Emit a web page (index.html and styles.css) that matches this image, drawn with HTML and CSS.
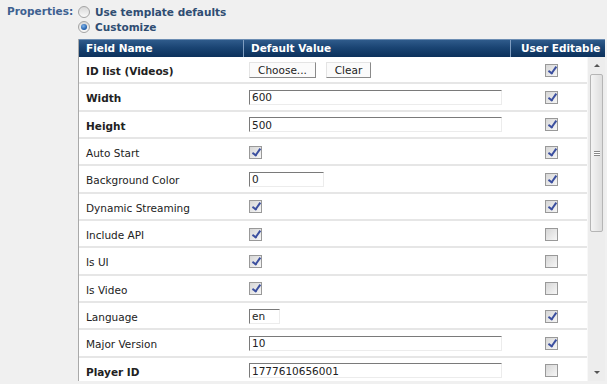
FILE: index.html
```html
<!DOCTYPE html>
<html lang="en">
<head>
    <meta charset="UTF-8">
    <title>Player Properties</title>
    <link rel="stylesheet" href="styles.css">
</head>
<body>
    <div class="props">
        <div class="props-label">Properties:</div>
        <div class="props-body">
            <div class="choices">
                <div class="choice"><span class="radio"></span>Use template defaults</div>
                <div class="choice"><span class="radio on"></span>Customize</div>
            </div>

            <div class="grid">
                <div class="grid-head">
                    <div class="hcell">Field Name</div>
                    <div class="hcell">Default Value</div>
                    <div class="hcell">User Editable</div>
                </div>
                <div class="grid-wrap">
                    <div class="grid-rows">
                        <div class="row">
                            <div class="c-name bold">ID list (Videos)</div>
                            <div class="c-value">
                                <button class="btn">Choose...</button>
                                <button class="btn">Clear</button>
                            </div>
                            <div class="c-edit"><span class="check on"></span></div>
                        </div>
                        <div class="row">
                            <div class="c-name bold">Width</div>
                            <div class="c-value"><input class="field wide" type="text" value="600"></div>
                            <div class="c-edit"><span class="check on"></span></div>
                        </div>
                        <div class="row">
                            <div class="c-name bold">Height</div>
                            <div class="c-value"><input class="field wide" type="text" value="500"></div>
                            <div class="c-edit"><span class="check on"></span></div>
                        </div>
                        <div class="row">
                            <div class="c-name">Auto Start</div>
                            <div class="c-value"><span class="check on"></span></div>
                            <div class="c-edit"><span class="check on"></span></div>
                        </div>
                        <div class="row">
                            <div class="c-name">Background Color</div>
                            <div class="c-value"><input class="field mid" type="text" value="0"></div>
                            <div class="c-edit"><span class="check on"></span></div>
                        </div>
                        <div class="row">
                            <div class="c-name">Dynamic Streaming</div>
                            <div class="c-value"><span class="check on"></span></div>
                            <div class="c-edit"><span class="check on"></span></div>
                        </div>
                        <div class="row">
                            <div class="c-name">Include API</div>
                            <div class="c-value"><span class="check on"></span></div>
                            <div class="c-edit"><span class="check"></span></div>
                        </div>
                        <div class="row">
                            <div class="c-name">Is UI</div>
                            <div class="c-value"><span class="check on"></span></div>
                            <div class="c-edit"><span class="check"></span></div>
                        </div>
                        <div class="row">
                            <div class="c-name">Is Video</div>
                            <div class="c-value"><span class="check on"></span></div>
                            <div class="c-edit"><span class="check"></span></div>
                        </div>
                        <div class="row">
                            <div class="c-name">Language</div>
                            <div class="c-value"><input class="field short" type="text" value="en"></div>
                            <div class="c-edit"><span class="check on"></span></div>
                        </div>
                        <div class="row">
                            <div class="c-name">Major Version</div>
                            <div class="c-value"><input class="field wide" type="text" value="10"></div>
                            <div class="c-edit"><span class="check on"></span></div>
                        </div>
                        <div class="row">
                            <div class="c-name bold">Player ID</div>
                            <div class="c-value"><input class="field wide" type="text" value="1777610656001"></div>
                            <div class="c-edit"><span class="check"></span></div>
                        </div>
                    </div>
                    <!-- fake scrollbar -->
                    <div class="scrollbar">
                        <div class="arrow up"></div>
                        <div class="thumb"><span class="grip"></span></div>
                        <div class="track"></div>
                        <div class="arrow down"></div>
                    </div>
                </div>
            </div>
        </div>
    </div>
</body>
</html>
```

FILE: styles.css
```css
body {
    margin: 0;
    padding: 0;
    background: #f0f0f0;
    font-family: "DejaVu Sans", Verdana, sans-serif;
    font-size: 10.5px;
    color: #222;
    overflow: hidden;
}
.props {
    display: flex;
    padding-top: 4px;
}
.props-label {
    width: 78px;
    flex-shrink: 0;
    padding-left: 7px;
    box-sizing: border-box;
    font-weight: bold;
    color: #3d6190;
    line-height: 15px;
}
.props-body {
    width: 527px;
}
.choices {
    margin-bottom: 5px;
}
.choice {
    display: flex;
    align-items: center;
    height: 15px;
    font-weight: bold;
    color: #2f4d72;
}
.radio {
    width: 10px;
    height: 10px;
    border: 1px solid #a4a4a4;
    border-radius: 50%;
    background: linear-gradient(#d8d8d8, #fafafa);
    margin-right: 5px;
    position: relative;
}
.radio.on::after {
    content: "";
    position: absolute;
    left: 2px;
    top: 2px;
    width: 6px;
    height: 6px;
    border-radius: 50%;
    background: radial-gradient(circle at 40% 35%, #7fb3e8, #1c5aa8 70%);
}
.grid {
    border-left: 1px solid #a9a9a9;
}
.grid-head {
    display: grid;
    grid-template-columns: 164px 267px 95px;
    height: 18px;
    background: linear-gradient(#2f5b8b, #1a4473 45%, #0c315b);
    border-top: 1px solid #6c8db3;
    box-sizing: border-box;
}
.hcell {
    color: #fff;
    font-weight: bold;
    line-height: 17px;
    padding-left: 7px;
    border-left: 1px solid #7f9dc0;
}
.hcell:first-child {
    border-left: none;
    padding-left: 7px;
}
.hcell:last-child {
    padding-left: 10px;
}
.grid-wrap {
    display: flex;
    height: 324px;
    background: #fff;
}
.grid-rows {
    width: 510px;
    overflow: hidden;
}
.row {
    display: grid;
    grid-template-columns: 164px 267px 79px;
    height: 27.33px;
    box-sizing: border-box;
    border-bottom: 2px solid #e6e6e6;
    align-items: center;
}
.c-name {
    padding-left: 7px;
    padding-top: 3px;
}
.bold {
    font-weight: bold;
}
.c-value {
    display: flex;
    align-items: center;
    gap: 10px;
    padding-left: 6px;
    padding-top: 1px;
}
.c-edit {
    display: flex;
    justify-content: center;
    padding-left: 4px;
    padding-top: 1px;
}
.check {
    display: block;
    width: 11px;
    height: 11px;
    border: 1px solid #999;
    background: linear-gradient(135deg, #d6d6d6, #f6f6f6);
    position: relative;
}
.check.on::after {
    content: "";
    position: absolute;
    left: 4px;
    top: 0;
    width: 3px;
    height: 7px;
    border-right: 2px solid #3b4f9f;
    border-bottom: 2px solid #3b4f9f;
    transform: rotate(35deg);
}
.field {
    height: 15px;
    box-sizing: border-box;
    margin: 0;
    padding: 0 2px;
    border: 1px solid;
    border-color: #7a7a7a #ececec #ececec #7a7a7a;
    background: #fff;
    font-family: "DejaVu Sans", Verdana, sans-serif;
    font-size: 10.5px;
    color: #222;
}
.wide {
    width: 253px;
}
.mid {
    width: 75px;
}
.short {
    width: 31px;
}
.btn {
    height: 16px;
    margin: 0;
    padding: 0 7px;
    border: 1px solid;
    border-color: #e4e4e4 #8a8a8a #8a8a8a #e4e4e4;
    background: #fbfbfb;
    font-family: "DejaVu Sans", Verdana, sans-serif;
    font-size: 10.5px;
    color: #222;
    line-height: 13px;
}
.btn:first-child {
    width: 67px;
}
.btn:last-child {
    width: 45px;
}
.scrollbar {
    width: 17px;
    background: #ededed;
    border-left: 1px solid #f8f8f8;
    display: flex;
    flex-direction: column;
    align-items: center;
}
.arrow {
    height: 17px;
    width: 17px;
    position: relative;
}
.arrow::after {
    content: "";
    position: absolute;
    left: 6px;
    width: 0;
    height: 0;
    border-left: 3px solid transparent;
    border-right: 3px solid transparent;
}
.arrow.up::after {
    top: 7px;
    border-bottom: 3px solid #555;
}
.arrow.down::after {
    top: 7px;
    border-top: 3px solid #555;
}
.thumb {
    width: 11px;
    height: 156px;
    border: 1px solid #b5b5b5;
    border-radius: 2px;
    background: linear-gradient(90deg, #f4f4f4, #dedede);
    display: flex;
    align-items: center;
    justify-content: center;
}
.grip {
    width: 6px;
    height: 5px;
    border-top: 1px solid #888;
    border-bottom: 1px solid #888;
    box-sizing: border-box;
    background: linear-gradient(#fff 40%, #888 40%, #888 60%, #fff 60%);
}
.track {
    flex: 1;
}
```
